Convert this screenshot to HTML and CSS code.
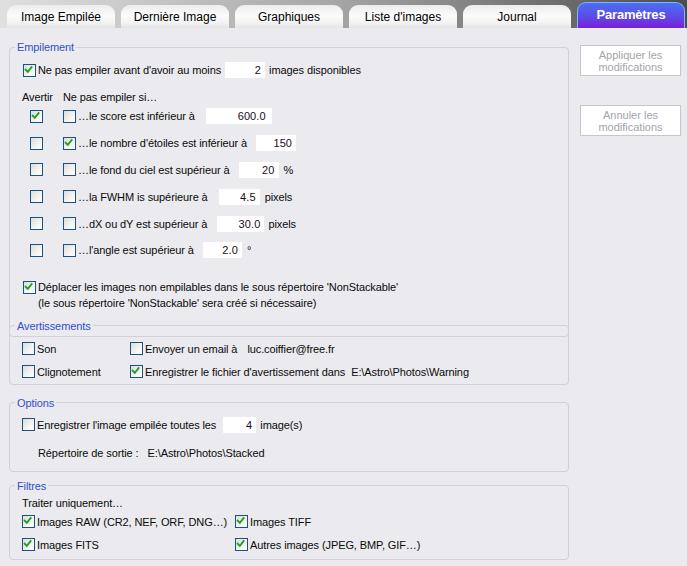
FILE: index.html
```html
<!DOCTYPE html>
<html lang="fr">
<head>
<meta charset="utf-8">
<title>Paramètres</title>
<link rel="stylesheet" href="styles.css">
</head>
<body>
<div class="tabbar">
  <div class="tab">Image Empilée</div>
  <div class="tab">Dernière Image</div>
  <div class="tab">Graphiques</div>
  <div class="tab">Liste d'images</div>
  <div class="tab">Journal</div>
  <div class="tab active">Paramètres</div>
</div>
<div class="main">
  <div class="left">
    <fieldset class="grp">
      <legend>Empilement</legend>
      <div class="body body-emp">
        <div class="row">
          <span class="cb on"><svg viewBox="0 0 13 13" width="11" height="11"><polyline points="2,5.5 4.5,8 9,2.5" /></svg></span>
          <span class="txt">Ne pas empiler avant d'avoir au moins</span>
          <span class="num n-first">2</span>
          <span class="unit">images disponibles</span>
        </div>
        <div class="cond-head">
          <span class="h-avertir">Avertir</span>
          <span>Ne pas empiler si…</span>
        </div>
        <div class="conds">
          <div class="cond">
            <span class="c1"><span class="cb on"><svg viewBox="0 0 13 13" width="11" height="11"><polyline points="2,5.5 4.5,8 9,2.5" /></svg></span></span>
            <span class="cb"></span>
            <span class="txt">…le score est inférieur à</span>
            <span class="num n-score">600.0</span>
          </div>
          <div class="cond">
            <span class="c1"><span class="cb"></span></span>
            <span class="cb on"><svg viewBox="0 0 13 13" width="11" height="11"><polyline points="2,5.5 4.5,8 9,2.5" /></svg></span>
            <span class="txt">…le nombre d'étoiles est inférieur à</span>
            <span class="num n-stars">150</span>
          </div>
          <div class="cond">
            <span class="c1"><span class="cb"></span></span>
            <span class="cb"></span>
            <span class="txt">…le fond du ciel est supérieur à</span>
            <span class="num n-sky">20</span>
            <span class="unit">%</span>
          </div>
          <div class="cond">
            <span class="c1"><span class="cb"></span></span>
            <span class="cb"></span>
            <span class="txt">…la FWHM is supérieure à</span>
            <span class="num n-fwhm">4.5</span>
            <span class="unit">pixels</span>
          </div>
          <div class="cond">
            <span class="c1"><span class="cb"></span></span>
            <span class="cb"></span>
            <span class="txt">…dX ou dY est supérieur à</span>
            <span class="num n-dxy">30.0</span>
            <span class="unit">pixels</span>
          </div>
          <div class="cond">
            <span class="c1"><span class="cb"></span></span>
            <span class="cb"></span>
            <span class="txt">…l'angle est supérieur à</span>
            <span class="num n-angle">2.0</span>
            <span class="unit">°</span>
          </div>
        </div>
        <div class="move">
          <span class="cb on"><svg viewBox="0 0 13 13" width="11" height="11"><polyline points="2,5.5 4.5,8 9,2.5" /></svg></span>
          <div class="move-txt">
            <div>Déplacer les images non empilables dans le sous répertoire 'NonStackable'</div>
            <div>(le sous répertoire 'NonStackable' sera créé si nécessaire)</div>
          </div>
        </div>
      </div>
    </fieldset>

    <fieldset class="grp grp-warn">
      <legend>Avertissements</legend>
      <div class="body body-warn">
        <div class="row"><span class="cb"></span><span class="txt">Son</span></div>
        <div class="row"><span class="cb"></span><span class="txt">Envoyer un email à</span><span class="val v-email">luc.coiffier@free.fr</span></div>
        <div class="row"><span class="cb"></span><span class="txt">Clignotement</span></div>
        <div class="row"><span class="cb on"><svg viewBox="0 0 13 13" width="11" height="11"><polyline points="2,5.5 4.5,8 9,2.5" /></svg></span><span class="txt">Enregistrer le fichier d'avertissement dans</span><span class="val v-warn">E:\Astro\Photos\Warning</span></div>
      </div>
    </fieldset>

    <fieldset class="grp grp-opt">
      <legend>Options</legend>
      <div class="body body-opt">
        <div class="row">
          <span class="cb"></span>
          <span class="txt">Enregistrer l'image empilée toutes les</span>
          <span class="num n-every">4</span>
          <span class="unit">image(s)</span>
        </div>
        <div class="row out-row">
          <span class="txt">Répertoire de sortie :</span>
          <span class="val v-out">E:\Astro\Photos\Stacked</span>
        </div>
      </div>
    </fieldset>

    <fieldset class="grp grp-filt">
      <legend>Filtres</legend>
      <div class="body body-filt">
        <div class="only">Traiter uniquement…</div>
        <div class="filt-grid">
          <div class="row"><span class="cb on"><svg viewBox="0 0 13 13" width="11" height="11"><polyline points="2,5.5 4.5,8 9,2.5" /></svg></span><span class="txt">Images RAW (CR2, NEF, ORF, DNG…)</span></div>
          <div class="row"><span class="cb on"><svg viewBox="0 0 13 13" width="11" height="11"><polyline points="2,5.5 4.5,8 9,2.5" /></svg></span><span class="txt">Images TIFF</span></div>
          <div class="row"><span class="cb on"><svg viewBox="0 0 13 13" width="11" height="11"><polyline points="2,5.5 4.5,8 9,2.5" /></svg></span><span class="txt">Images FITS</span></div>
          <div class="row"><span class="cb on"><svg viewBox="0 0 13 13" width="11" height="11"><polyline points="2,5.5 4.5,8 9,2.5" /></svg></span><span class="txt">Autres images (JPEG, BMP, GIF…)</span></div>
        </div>
      </div>
    </fieldset>
  </div>

  <div class="right">
    <div class="btn">Appliquer les<br>modifications</div>
    <div class="btn btn-2">Annuler les<br>modifications</div>
  </div>
</div>
</body>
</html>
```

FILE: styles.css
```css
* { box-sizing: border-box; }

html, body {
  margin: 0;
  padding: 0;
}

body {
  width: 687px;
  height: 566px;
  overflow: hidden;
  background: #ebeaee;
  font-family: "Liberation Sans", Arial, sans-serif;
  font-size: 11px;
  letter-spacing: -0.1px;
  color: #0a0a0a;
}

/* ---------- tab bar ---------- */
.tabbar {
  height: 28px;
  display: flex;
  align-items: flex-end;
  gap: 6px;
  padding-left: 7px;
  background: linear-gradient(to right, #e0e0e0 0%, #a4a4a4 50%, #4c4c4c 100%);
}

.tab {
  width: 108px;
  height: 23px;
  border-radius: 9px 9px 0 0;
  background: linear-gradient(to bottom, #ececec 0%, #fbfbfb 45%, #f4f4f4 75%, #e4e4e4 100%);
  font-size: 12px;
  letter-spacing: 0;
  color: #000;
  display: flex;
  align-items: center;
  justify-content: center;
  padding-top: 1px;
}

.tab.active {
  height: 26px;
  border: 1px solid #7fb2ff;
  border-bottom: none;
  background: linear-gradient(to bottom, #4a6ff2 0%, #5a4ee8 50%, #7a1fd8 100%);
  color: #fff;
  font-weight: bold;
  font-size: 13px;
  letter-spacing: -0.2px;
  align-items: flex-start;
  padding-top: 4px;
}

/* ---------- main ---------- */
.main {
  display: flex;
  align-items: flex-start;
}

.left {
  width: 560px;
  margin-left: 9px;
  margin-top: 12px;
  display: flex;
  flex-direction: column;
}

.right {
  margin-left: 11px;
  margin-top: 17px;
  display: flex;
  flex-direction: column;
}

.btn {
  width: 101px;
  height: 31px;
  background: #fff;
  border: 1px solid #c6c6ca;
  color: #a4a4aa;
  text-align: center;
  line-height: 12px;
  padding-top: 3px;
  letter-spacing: 0;
}

.btn-2 {
  margin-top: 29px;
}

/* ---------- group boxes ---------- */
.grp {
  margin: 0;
  padding: 0;
  border: 1px solid #d2d0d6;
  border-radius: 4px;
  min-width: 0;
}

.grp legend {
  margin-left: 5px;
  padding: 0 2px;
  line-height: 14px;
  height: 14px;
  color: #3050cc;
}

.grp-warn { margin-top: -18px; }
.grp-opt  { margin-top: 11px; }
.grp-filt { margin-top: 7px; }

.body-emp  { padding: 8px 0 25px 13px; }
.body-warn {
  padding: 8px 0 4px 12px;
  display: grid;
  grid-template-columns: 108px auto;
  row-gap: 7px;
}
.body-opt  { padding: 7px 0 10px 12px; }
.body-filt { padding: 3px 0 6px 12px; }

.row {
  display: flex;
  align-items: center;
  height: 16px;
  white-space: nowrap;
}

.txt { white-space: nowrap; }

/* ---------- checkbox ---------- */
.cb {
  flex: none;
  width: 13px;
  height: 13px;
  border: 1px solid #1c5180;
  background: linear-gradient(135deg, #dcdcd7 0%, #f4f4f2 60%, #ffffff 100%);
  display: inline-flex;
  align-items: center;
  justify-content: center;
  margin-right: 2px;
}

.cb svg {
  display: block;
}

.cb polyline {
  fill: none;
  stroke: #21a121;
  stroke-width: 2.2;
  stroke-linecap: square;
  stroke-linejoin: miter;
}

/* ---------- number fields ---------- */
.num {
  flex: none;
  height: 16px;
  background: #fff;
  display: inline-flex;
  align-items: center;
  justify-content: flex-end;
  padding-right: 4px;
  color: #1c0c24;
  letter-spacing: 0.1px;
}

.unit { margin-left: 4px; }

.n-first { width: 40px; margin-left: 4px; }
.n-score { width: 66px; margin-left: 11px; padding-right: 6px; }
.n-stars { width: 40px; margin-left: 9px; }
.n-sky   { width: 40px; margin-left: 9px; }
.n-fwhm  { width: 41px; margin-left: 11px; }
.n-dxy   { width: 47px; margin-left: 10px; }
.n-angle { width: 39px; margin-left: 9px; }
.n-every { width: 33px; margin-left: 7px; }

.n-sky + .unit,
.n-fwhm + .unit,
.n-angle + .unit { margin-left: 5px; }

/* ---------- stacking conditions ---------- */
.cond-head {
  margin-top: 12px;
  height: 14px;
  display: flex;
  align-items: center;
  margin-left: -1px;
}

.h-avertir { width: 41px; }

.conds { margin-top: -1px; }

.cond {
  height: 26.8px;
  display: flex;
  align-items: center;
  white-space: nowrap;
}

.c1 {
  width: 40px;
  padding-left: 7px;
  display: flex;
}

.move {
  margin-top: 15px;
  display: flex;
  align-items: flex-start;
}

.move > .cb { margin-top: 2px; }

.move-txt {
  line-height: 16px;
  white-space: nowrap;
}

/* ---------- values ---------- */
.val { white-space: nowrap; }
.v-email { margin-left: 10px; }
.v-warn  { margin-left: 6px; }

.out-row {
  margin-top: 12px;
  padding-left: 16px;
}
.v-out { margin-left: 9px; }

/* ---------- filters ---------- */
.only {
  height: 14px;
  line-height: 14px;
}

.filt-grid {
  margin-top: 4px;
  display: grid;
  grid-template-columns: 213px auto;
  row-gap: 7px;
}
```
